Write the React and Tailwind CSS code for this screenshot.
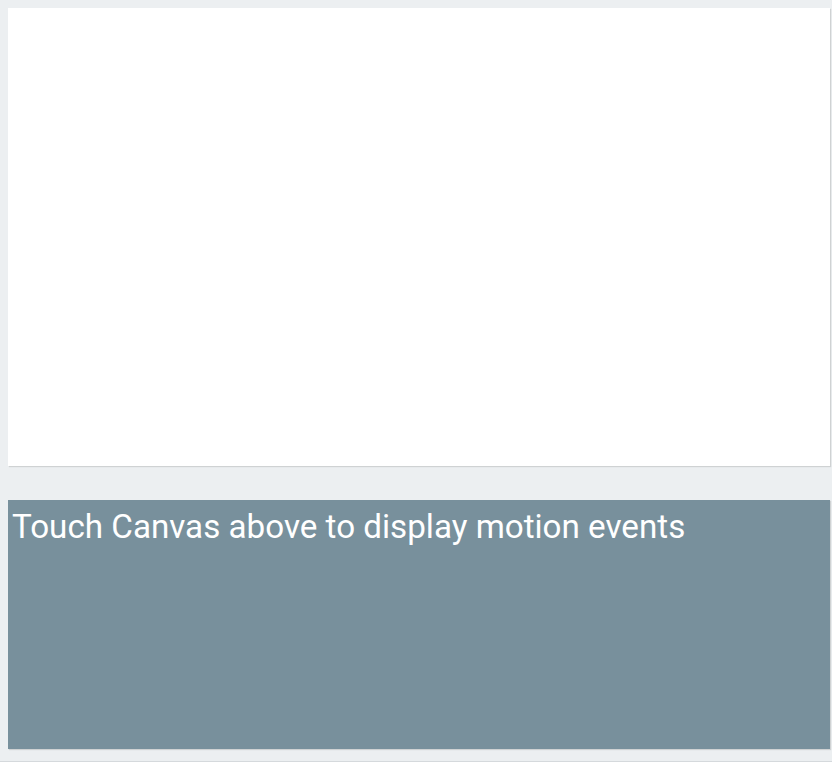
export default function App() {
  return (
    <div className="w-[832px] h-[762px] bg-[#eceff1] flex flex-col pl-2 pt-2 pr-[2px] overflow-hidden border-b border-[#d5d9dc]" style={{ fontFamily: 'Roboto, "Noto Sans", sans-serif' }}>
      <div className="h-[458px] bg-white shadow-[1px_1px_1px_rgba(0,0,0,0.12)]" />
      <div className="mt-[34px] h-[249px] bg-[#78909c] shadow-[1px_1px_1px_rgba(0,0,0,0.12)] pl-1 pt-[7px]">
        <div className="text-white text-[33.2px] leading-[40px]">Touch Canvas above to display motion events</div>
      </div>
    </div>
  );
}
